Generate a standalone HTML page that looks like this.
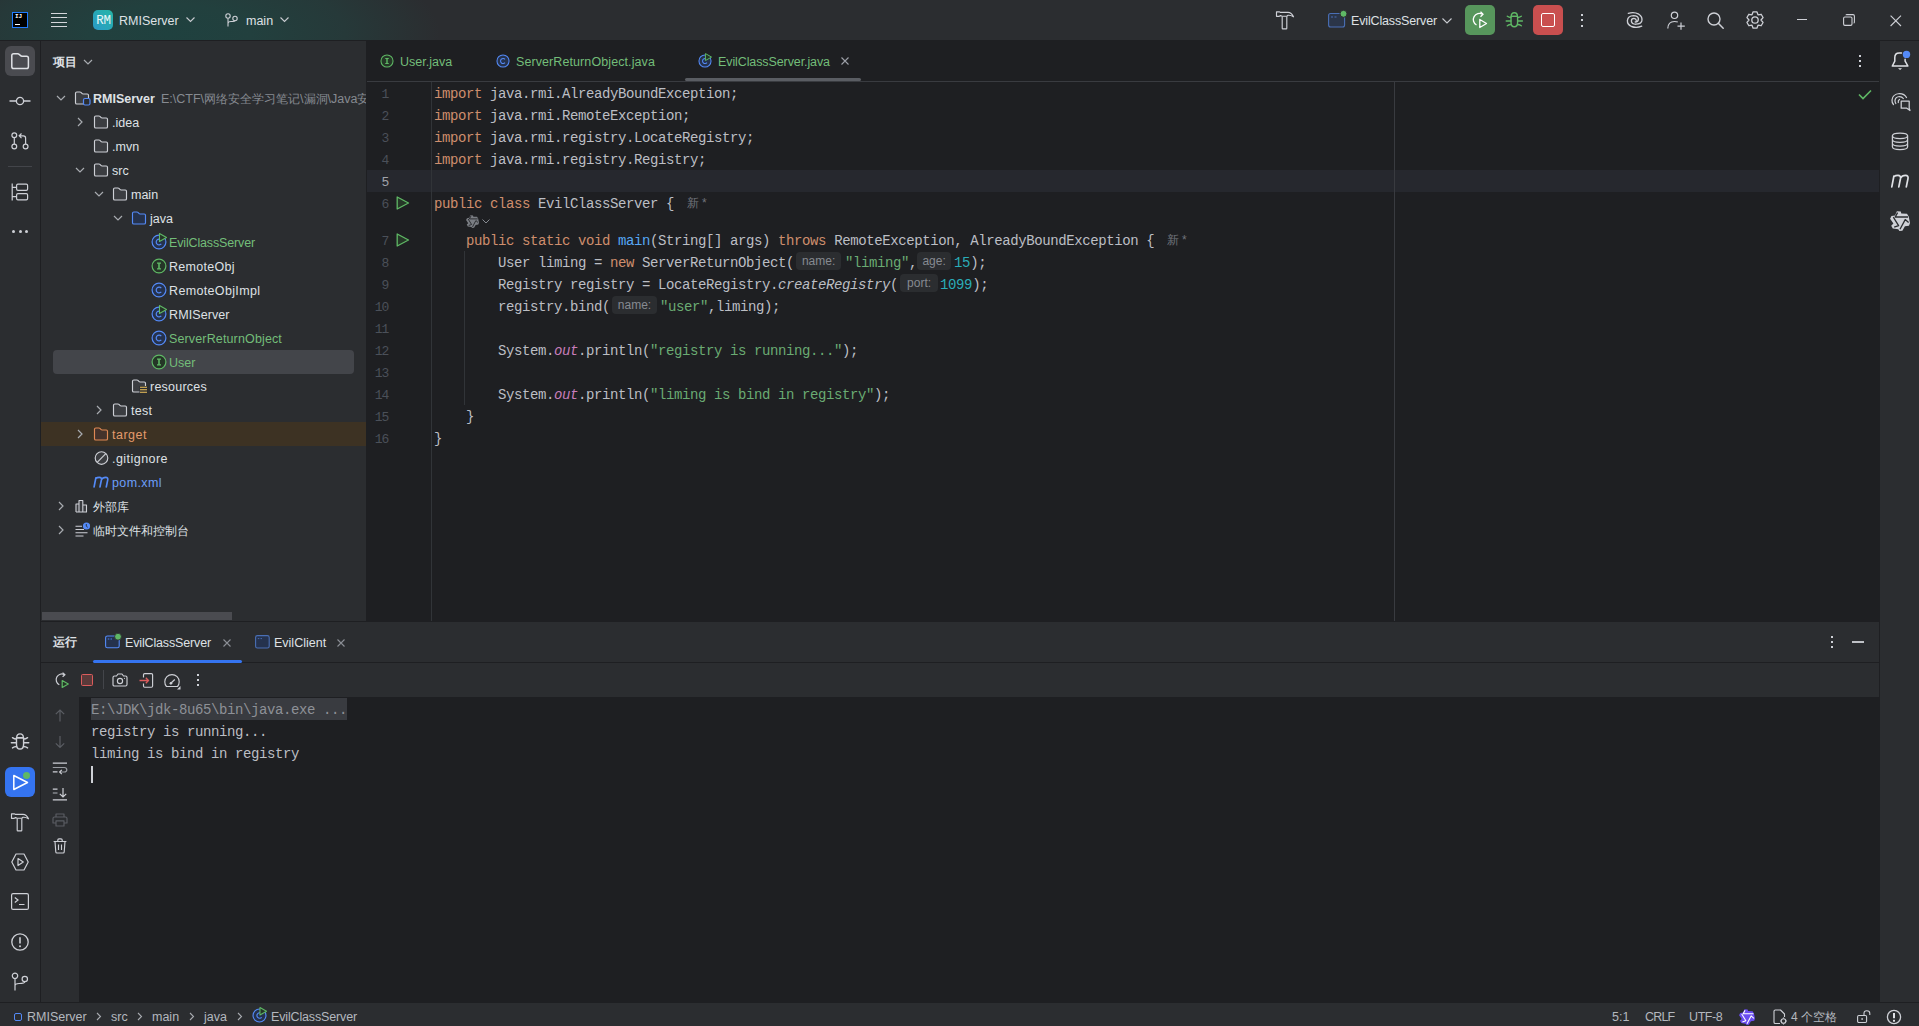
<!DOCTYPE html>
<html><head><meta charset="utf-8">
<style>
*{box-sizing:border-box;margin:0;padding:0}
html,body{width:1919px;height:1026px;overflow:hidden;background:#1E1F22;font-family:"Liberation Sans",sans-serif;font-size:12.5px;color:#DFE1E5}
.a{position:absolute}
.t{position:absolute;white-space:pre;line-height:24px}
.m{font-family:"Liberation Mono",monospace;font-size:14px;letter-spacing:-0.4px;line-height:22px;white-space:pre;position:absolute}
svg{position:absolute;overflow:visible}
/* syntax */
.k{color:#CF8E6D}.s{color:#6AAB73}.n{color:#2AACB8}.f{color:#56A8F5}.st{color:#C77DBB;font-style:italic}.it{font-style:italic}
.hw{display:inline-block;position:relative;height:22px;vertical-align:top}
.hint{position:absolute;top:0px;height:18px;background:#2B2D30;color:#868A91;font-family:"Liberation Sans",sans-serif;font-size:12px;letter-spacing:0;line-height:18px;text-align:center;border-radius:4px}
</style></head><body>




<!-- ============ TITLE BAR ============ -->
<div class="a" style="left:0;top:0;width:1919px;height:40px;background:#2B2D30"></div>
<div class="a" style="left:0;top:0;width:900px;height:40px;background:radial-gradient(ellipse 270px 100px at 170px 34px,#1f413f 0%,#22403e 30%,#263939 65%,#2B2D30 100%)"></div>
<div class="a" style="left:0;top:40px;width:1919px;height:1px;background:#1E1F22"></div>


<!-- title content -->
<div class="a" style="left:12px;top:12px;width:16px;height:16px;background:#000;border:1.2px solid #1F7BFF"></div>
<div class="a" style="left:15px;top:13px;font-family:'Liberation Mono';font-weight:700;font-size:6px;line-height:7px;color:#fff">IJ</div>
<div class="a" style="left:15px;top:23.5px;width:5px;height:1.3px;background:#fff"></div>
<div class="a" style="left:51px;top:12.5px;width:16px;height:1.4px;background:#D4D6DB"></div>
<div class="a" style="left:51px;top:17px;width:16px;height:1.4px;background:#D4D6DB"></div>
<div class="a" style="left:51px;top:21.5px;width:16px;height:1.4px;background:#D4D6DB"></div>
<div class="a" style="left:51px;top:26px;width:16px;height:1.4px;background:#D4D6DB"></div>
<div class="a" style="left:93px;top:10px;width:20px;height:20px;border-radius:5px;background:linear-gradient(45deg,#2A9BC8,#25B5A6)"></div>
<div class="t" style="left:93.5px;top:9px;width:20px;text-align:center;font-family:'Liberation Mono';font-size:12.5px;color:#EAF6F6;letter-spacing:-0.2px">RM</div>
<div class="t" style="left:119px;top:9px;color:#DFE1E5">RMIServer</div>
<svg style="left:186px;top:17px" width="9" height="6"><path d="M0.5 0.5 L4.5 4.5 L8.5 0.5" fill="none" stroke="#C9CCD1" stroke-width="1.1"/></svg>
<svg style="left:225px;top:13px" width="13" height="14"><circle cx="3" cy="3" r="2.2" fill="none" stroke="#CED0D6" stroke-width="1.1"/><circle cx="10" cy="5.5" r="2.2" fill="none" stroke="#CED0D6" stroke-width="1.1"/><path d="M3 5.2 V13.5 M3 10.5 Q3 8.5 6 8.5 Q10 8.5 10 7.7" fill="none" stroke="#CED0D6" stroke-width="1.1"/></svg>
<div class="t" style="left:246px;top:9px;color:#DFE1E5">main</div>
<svg style="left:280px;top:17px" width="9" height="6"><path d="M0.5 0.5 L4.5 4.5 L8.5 0.5" fill="none" stroke="#C9CCD1" stroke-width="1.1"/></svg>

<!-- hammer -->
<svg style="left:1275px;top:10px" width="20" height="20"><path d="M1.5 1.8 H4.3 L5.5 2.4 H13 Q16.5 2.4 18.5 6.8 Q15.5 4.9 13 5.3 L11.8 6.2 H7.2 L5.5 5.6 L4.3 6.3 H1.5 Z" fill="none" stroke="#CED0D6" stroke-width="1.15" stroke-linejoin="round"/><path d="M7.2 6.4 V18.2 Q7.2 18.8 7.8 18.8 H11.2 Q11.8 18.8 11.8 18.2 V6.4" fill="none" stroke="#CED0D6" stroke-width="1.15"/></svg>
<!-- run config -->
<svg style="left:1328px;top:10px" width="22" height="18"><rect x="0.6" y="3.5" width="16" height="13.5" rx="2" fill="#2B3548" stroke="#4A6FB5" stroke-width="1.1"/><path d="M3 7 H5 M6.5 7 H8.5" stroke="#4A6FB5" stroke-width="1"/><circle cx="15.5" cy="3.8" r="3.5" fill="#5FB865" stroke="#2B2D30" stroke-width="1"/></svg>
<div class="t" style="left:1351px;top:9px;color:#DFE1E5;letter-spacing:-0.15px">EvilClassServer</div>
<svg style="left:1442px;top:18px" width="10" height="6"><path d="M0.5 0.5 L5 5 L9.5 0.5" fill="none" stroke="#C9CCD1" stroke-width="1.1"/></svg>
<div class="a" style="left:1465px;top:5px;width:30px;height:30px;border-radius:5px;background:#57965C"></div>
<svg style="left:1471px;top:11px" width="19" height="19"><path d="M11.5 3.2 A6 6 0 1 0 5.5 14" fill="none" stroke="#fff" stroke-width="1.3"/><path d="M9.5 0.8 L12 3.3 L9.5 5.8" fill="none" stroke="#fff" stroke-width="1.3"/><path d="M8.8 8.5 L15.5 12.5 L8.8 16.5 Z" fill="none" stroke="#fff" stroke-width="1.3" stroke-linejoin="round"/></svg>
<svg style="left:1505px;top:12px" width="19" height="16"><path d="M6.2 4.4 Q6.2 0.8 9.3 0.8 Q12.4 0.8 12.4 4.4 Z" fill="none" stroke="#5FB865" stroke-width="1.4" stroke-linejoin="round"/><path d="M6 4.4 H12.6 V10.3 Q12.6 14.8 9.3 14.8 Q6 14.8 6 10.3 Z" fill="none" stroke="#5FB865" stroke-width="1.4" stroke-linejoin="round"/><path d="M2.3 4.3 Q4 5.6 6 5.6 M16.3 4.3 Q14.6 5.6 12.6 5.6 M1.2 9 H6 M12.6 9 H17.4 M2.3 13.8 Q4 12.5 6 12.5 M16.3 13.8 Q14.6 12.5 12.6 12.5" fill="none" stroke="#5FB865" stroke-width="1.4" stroke-linecap="round"/></svg>
<div class="a" style="left:1533px;top:5px;width:30px;height:30px;border-radius:5px;background:#C94F4F"></div>
<div class="a" style="left:1541px;top:13px;width:14px;height:14px;border-radius:2px;border:1.4px solid #fff"></div>
<div class="a" style="left:1581px;top:13.5px;width:2px;height:2px;background:#CED0D6"></div>
<div class="a" style="left:1581px;top:19px;width:2px;height:2px;background:#CED0D6"></div>
<div class="a" style="left:1581px;top:24.5px;width:2px;height:2px;background:#CED0D6"></div>
<!-- ai swirl -->
<svg style="left:1622px;top:6px" width="28" height="28"><path d="M6.3 7.4 Q12 5.6 16.8 8.2 Q20.8 10.8 19.8 15 Q18.8 18 14 18.2 Q9.6 18.2 9.4 15 Q9.4 12.4 12 12.4 Q14 12.6 14.3 14.3" fill="none" stroke="#CED0D6" stroke-width="1.35" stroke-linecap="round"/><path d="M19.7 20.2 Q14.5 22.3 9.5 20.5 Q5.2 18.5 5.4 14.5 Q6 9.8 11.5 9.7 Q16.2 9.8 16.4 12.9 Q16.4 15.8 13.2 16" fill="none" stroke="#CED0D6" stroke-width="1.35" stroke-linecap="round"/></svg>
<!-- person plus -->
<svg style="left:1667px;top:11px" width="19" height="19"><circle cx="7.5" cy="4.3" r="3.2" fill="none" stroke="#CED0D6" stroke-width="1.2"/><path d="M0.8 17.5 Q1 10.5 7.5 10.5 Q9.5 10.5 10.8 11" fill="none" stroke="#CED0D6" stroke-width="1.2"/><path d="M14 11.5 V18.8 M10.5 15.2 H17.8" stroke="#CED0D6" stroke-width="1.2"/></svg>
<!-- search -->
<svg style="left:1707px;top:12px" width="17" height="17"><circle cx="7" cy="7" r="6" fill="none" stroke="#CED0D6" stroke-width="1.4"/><path d="M11.3 11.3 L16.2 16.2" stroke="#CED0D6" stroke-width="1.5" stroke-linecap="round"/></svg>
<!-- gear -->
<svg style="left:1741px;top:6px" width="28" height="28"><path d="M12.11 5.82 L15.89 5.82 L17.00 8.80 L20.14 8.27 L22.03 11.54 L20.00 14.00 L22.03 16.46 L20.14 19.73 L17.00 19.20 L15.89 22.18 L12.11 22.18 L11.00 19.20 L7.86 19.73 L5.97 16.46 L8.00 14.00 L5.97 11.54 L7.86 8.27 L11.00 8.80 Z" fill="none" stroke="#CED0D6" stroke-width="1.3" stroke-linejoin="round"/><circle cx="14" cy="14" r="3.2" fill="none" stroke="#CED0D6" stroke-width="1.3"/></svg>
<div class="a" style="left:1797px;top:19px;width:10px;height:1.1px;background:#CED0D6"></div>
<svg style="left:1843px;top:14px" width="12" height="12"><rect x="0.6" y="3" width="8.4" height="8.4" rx="1.3" fill="none" stroke="#CED0D6" stroke-width="1.1"/><path d="M3 1.2 Q3 0.6 4 0.6 H10 Q11.4 0.6 11.4 2 V8 Q11.4 9 10.6 9" fill="none" stroke="#CED0D6" stroke-width="1.1"/></svg>
<svg style="left:1890px;top:14.5px" width="12" height="12"><path d="M0.6 0.6 L11 11 M11 0.6 L0.6 11" stroke="#CED0D6" stroke-width="1.1"/></svg>

<!-- ============ LEFT STRIPE ============ -->
<div class="a" style="left:0;top:41px;width:40px;height:962px;background:#2B2D30"></div>
<div class="a" style="left:40px;top:41px;width:1px;height:962px;background:#1E1F22"></div>


<!-- left stripe icons -->
<div class="a" style="left:5px;top:46px;width:30px;height:30px;border-radius:6px;background:#4A4B50"></div>
<svg style="left:10px;top:52px" width="20" height="18"><path d="M1.8 3.6 Q1.8 1.8 3.6 1.8 H7.8 Q8.6 1.8 9.2 2.4 L10.6 3.6 Q11.2 4.2 12 4.2 H16.6 Q18.4 4.2 18.4 6 V14.8 Q18.4 16.6 16.6 16.6 H3.6 Q1.8 16.6 1.8 14.8 Z" fill="none" stroke="#DFE1E5" stroke-width="1.5" stroke-linejoin="round"/></svg>
<svg style="left:9px;top:95px" width="22" height="12"><circle cx="11" cy="6" r="3.6" fill="none" stroke="#CED0D6" stroke-width="1.3"/><path d="M0.5 6 H7.4 M14.6 6 H21.5" stroke="#CED0D6" stroke-width="1.3"/></svg>
<svg style="left:11px;top:132px" width="18" height="18"><circle cx="3.3" cy="3.3" r="2.4" fill="none" stroke="#CED0D6" stroke-width="1.2"/><circle cx="3.3" cy="14.5" r="2.4" fill="none" stroke="#CED0D6" stroke-width="1.2"/><circle cx="14.6" cy="14.5" r="2.4" fill="none" stroke="#CED0D6" stroke-width="1.2"/><path d="M3.3 5.7 V12.1 M14.6 12.1 V6 Q14.6 3.8 12.4 3.8 H8.5 M10.5 1.5 L8.2 3.8 L10.5 6.1" fill="none" stroke="#CED0D6" stroke-width="1.2"/></svg>
<div class="a" style="left:8px;top:166px;width:24px;height:1px;background:#43454A"></div>
<svg style="left:11px;top:183px" width="18" height="18"><path d="M1.2 0.5 V17.5 M1.2 4.3 H5.6 M1.2 13.7 H5.6" fill="none" stroke="#CED0D6" stroke-width="1.2"/><rect x="5.6" y="1.2" width="11" height="6.2" rx="1.3" fill="none" stroke="#CED0D6" stroke-width="1.2"/><rect x="5.6" y="10.6" width="11" height="6.2" rx="1.3" fill="none" stroke="#CED0D6" stroke-width="1.2"/></svg>
<div class="a" style="left:12px;top:230px;width:3px;height:3px;border-radius:50%;background:#CED0D6"></div>
<div class="a" style="left:18.5px;top:230px;width:3px;height:3px;border-radius:50%;background:#CED0D6"></div>
<div class="a" style="left:25px;top:230px;width:3px;height:3px;border-radius:50%;background:#CED0D6"></div>

<svg style="left:10px;top:733px" width="20.5" height="17.3" viewBox="0 0 19 16"><path d="M6.2 4.4 Q6.2 0.8 9.3 0.8 Q12.4 0.8 12.4 4.4 Z" fill="none" stroke="#CED0D6" stroke-width="1.3" stroke-linejoin="round"/><path d="M6 4.4 H12.6 V10.3 Q12.6 14.8 9.3 14.8 Q6 14.8 6 10.3 Z" fill="none" stroke="#CED0D6" stroke-width="1.3" stroke-linejoin="round"/><path d="M2.3 4.3 Q4 5.6 6 5.6 M16.3 4.3 Q14.6 5.6 12.6 5.6 M1.2 9 H6 M12.6 9 H17.4 M2.3 13.8 Q4 12.5 6 12.5 M16.3 13.8 Q14.6 12.5 12.6 12.5" fill="none" stroke="#CED0D6" stroke-width="1.3" stroke-linecap="round"/></svg>
<div class="a" style="left:5px;top:767px;width:30px;height:30px;border-radius:6px;background:#3574F0"></div>
<svg style="left:12px;top:774px" width="18" height="17"><path d="M1.8 1.5 L15.5 8.5 L1.8 15.5 Z" fill="none" stroke="#fff" stroke-width="1.5" stroke-linejoin="round"/></svg>
<div class="a" style="left:23px;top:772px;width:7px;height:7px;border-radius:50%;background:#5FB865;box-shadow:0 0 0 1px #3574F0"></div>
<svg style="left:10px;top:812px" width="20" height="20"><path d="M1.5 1.8 H4.3 L5.5 2.4 H13 Q16.5 2.4 18.5 6.8 Q15.5 4.9 13 5.3 L11.8 6.2 H7.2 L5.5 5.6 L4.3 6.3 H1.5 Z" fill="none" stroke="#CED0D6" stroke-width="1.15" stroke-linejoin="round"/><path d="M7.2 6.4 V18.2 Q7.2 18.8 7.8 18.8 H11.2 Q11.8 18.8 11.8 18.2 V6.4" fill="none" stroke="#CED0D6" stroke-width="1.15"/></svg>
<svg style="left:11px;top:853px" width="18" height="18"><path d="M5 1 H13 L17.2 9 L13 17 H5 L0.8 9 Z" fill="none" stroke="#CED0D6" stroke-width="1.2" stroke-linejoin="round"/><path d="M7 5.5 L12.3 9 L7 12.5 Z" fill="none" stroke="#CED0D6" stroke-width="1.2" stroke-linejoin="round"/></svg>
<svg style="left:11px;top:893px" width="18" height="17"><rect x="0.6" y="0.6" width="16.8" height="15.8" rx="1.5" fill="none" stroke="#CED0D6" stroke-width="1.2"/><path d="M3.8 4.5 L7 7 L3.8 9.5 M8 11.5 H13.5" fill="none" stroke="#CED0D6" stroke-width="1.2"/></svg>
<svg style="left:11px;top:933px" width="18" height="18"><circle cx="9" cy="9" r="8.2" fill="none" stroke="#CED0D6" stroke-width="1.3"/><path d="M9 4.2 V10.5" stroke="#CED0D6" stroke-width="1.6"/><circle cx="9" cy="13.2" r="1" fill="#CED0D6"/></svg>
<svg style="left:11px;top:972px" width="18" height="19"><circle cx="4" cy="3.8" r="2.7" fill="none" stroke="#CED0D6" stroke-width="1.2"/><circle cx="13.8" cy="7" r="2.7" fill="none" stroke="#CED0D6" stroke-width="1.2"/><path d="M4 6.5 V18.5 M4 14 Q4 11.5 8 11.5 Q13.8 11.5 13.8 9.7" fill="none" stroke="#CED0D6" stroke-width="1.2"/></svg>

<!-- ============ PROJECT PANEL ============ -->
<div class="a" style="left:41px;top:41px;width:325px;height:580px;background:#2B2D30"></div>
<div class="a" style="left:366px;top:41px;width:1px;height:580px;background:#1E1F22"></div>

<!-- project panel content -->
<div class="t" style="left:53px;top:50px;font-size:12px;color:#DFE1E5;font-weight:700">项目</div>
<svg style="left:83px;top:58px" width="10" height="8"><svg viewBox="0 0 10 8" width="10" height="8" style="position:static;overflow:visible"><path d="M1 2 L5 6 L9 2" fill="none" stroke="#A8ABB0" stroke-width="1.2"/></svg></svg>
<div class="a" style="left:53px;top:350px;width:301px;height:24px;border-radius:4px;background:#43454A"></div>
<div class="a" style="left:41px;top:422px;width:325px;height:24px;background:#3D3223"></div>
<div class="a" style="left:42px;top:612px;width:190px;height:8px;border-radius:0;background:#4A4B50"></div>
<svg style="left:56px;top:94px" width="10" height="8"><svg viewBox="0 0 10 8" width="10" height="8" style="position:static;overflow:visible"><path d="M1 2 L5 6 L9 2" fill="none" stroke="#A8ABB0" stroke-width="1.2"/></svg></svg>
<svg style="left:74px;top:91px" width="18" height="16"><svg viewBox="0 0 16 14" width="16" height="14" style="position:static;overflow:visible"><path d="M1.5 2.3 Q1.5 1 2.8 1 H6 Q6.5 1 6.9 1.4 L8.2 2.7 Q8.5 3 9 3 H13.2 Q14.5 3 14.5 4.3 V11.7 Q14.5 13 13.2 13 H2.8 Q1.5 13 1.5 11.7 Z" fill="#3B3D41" stroke="#CED0D6" stroke-width="1.15" stroke-linejoin="round"/></svg><rect x="9.5" y="7.5" width="6.5" height="6.5" rx="1.5" fill="#2B2D30" stroke="#548AF7" stroke-width="1.2"/></svg>
<div class="t" style="left:93px;top:87px;color:#DFE1E5;font-weight:700">RMIServer</div>
<svg style="left:76px;top:117px" width="8" height="10"><svg viewBox="0 0 8 10" width="8" height="10" style="position:static;overflow:visible"><path d="M2 1 L6 5 L2 9" fill="none" stroke="#A8ABB0" stroke-width="1.2"/></svg></svg>
<svg style="left:93px;top:115px" width="16" height="14"><svg viewBox="0 0 16 14" width="16" height="14" style="position:static;overflow:visible"><path d="M1.5 2.3 Q1.5 1 2.8 1 H6 Q6.5 1 6.9 1.4 L8.2 2.7 Q8.5 3 9 3 H13.2 Q14.5 3 14.5 4.3 V11.7 Q14.5 13 13.2 13 H2.8 Q1.5 13 1.5 11.7 Z" fill="#3B3D41" stroke="#CED0D6" stroke-width="1.15" stroke-linejoin="round"/></svg></svg>
<div class="t" style="left:112px;top:111px;color:#DFE1E5">.idea</div>
<svg style="left:93px;top:139px" width="16" height="14"><svg viewBox="0 0 16 14" width="16" height="14" style="position:static;overflow:visible"><path d="M1.5 2.3 Q1.5 1 2.8 1 H6 Q6.5 1 6.9 1.4 L8.2 2.7 Q8.5 3 9 3 H13.2 Q14.5 3 14.5 4.3 V11.7 Q14.5 13 13.2 13 H2.8 Q1.5 13 1.5 11.7 Z" fill="#3B3D41" stroke="#CED0D6" stroke-width="1.15" stroke-linejoin="round"/></svg></svg>
<div class="t" style="left:112px;top:135px;color:#DFE1E5">.mvn</div>
<svg style="left:75px;top:166px" width="10" height="8"><svg viewBox="0 0 10 8" width="10" height="8" style="position:static;overflow:visible"><path d="M1 2 L5 6 L9 2" fill="none" stroke="#A8ABB0" stroke-width="1.2"/></svg></svg>
<svg style="left:93px;top:163px" width="16" height="14"><svg viewBox="0 0 16 14" width="16" height="14" style="position:static;overflow:visible"><path d="M1.5 2.3 Q1.5 1 2.8 1 H6 Q6.5 1 6.9 1.4 L8.2 2.7 Q8.5 3 9 3 H13.2 Q14.5 3 14.5 4.3 V11.7 Q14.5 13 13.2 13 H2.8 Q1.5 13 1.5 11.7 Z" fill="#3B3D41" stroke="#CED0D6" stroke-width="1.15" stroke-linejoin="round"/></svg></svg>
<div class="t" style="left:112px;top:159px;color:#DFE1E5">src</div>
<svg style="left:94px;top:190px" width="10" height="8"><svg viewBox="0 0 10 8" width="10" height="8" style="position:static;overflow:visible"><path d="M1 2 L5 6 L9 2" fill="none" stroke="#A8ABB0" stroke-width="1.2"/></svg></svg>
<svg style="left:112px;top:187px" width="16" height="14"><svg viewBox="0 0 16 14" width="16" height="14" style="position:static;overflow:visible"><path d="M1.5 2.3 Q1.5 1 2.8 1 H6 Q6.5 1 6.9 1.4 L8.2 2.7 Q8.5 3 9 3 H13.2 Q14.5 3 14.5 4.3 V11.7 Q14.5 13 13.2 13 H2.8 Q1.5 13 1.5 11.7 Z" fill="#3B3D41" stroke="#CED0D6" stroke-width="1.15" stroke-linejoin="round"/></svg></svg>
<div class="t" style="left:131px;top:183px;color:#DFE1E5">main</div>
<svg style="left:113px;top:214px" width="10" height="8"><svg viewBox="0 0 10 8" width="10" height="8" style="position:static;overflow:visible"><path d="M1 2 L5 6 L9 2" fill="none" stroke="#A8ABB0" stroke-width="1.2"/></svg></svg>
<svg style="left:131px;top:211px" width="16" height="14"><svg viewBox="0 0 16 14" width="16" height="14" style="position:static;overflow:visible"><path d="M1.5 2.3 Q1.5 1 2.8 1 H6 Q6.5 1 6.9 1.4 L8.2 2.7 Q8.5 3 9 3 H13.2 Q14.5 3 14.5 4.3 V11.7 Q14.5 13 13.2 13 H2.8 Q1.5 13 1.5 11.7 Z" fill="#25324D" stroke="#548AF7" stroke-width="1.15" stroke-linejoin="round"/></svg></svg>
<div class="t" style="left:150px;top:207px;color:#DFE1E5">java</div>
<svg style="left:151px;top:234px" width="16" height="16"><svg viewBox="0 0 16 16" width="16" height="16" style="position:static;overflow:visible"><circle cx="8" cy="8" r="6.9" fill="#25324D" stroke="#548AF7" stroke-width="1.2"/><path d="M10.3 6.1 A2.9 2.9 0 1 0 10.3 9.9" fill="none" stroke="#548AF7" stroke-width="1.2"/><path d="M8.5 -0.5 L15.5 3.5 L8.5 7.5 Z" fill="#253627" stroke="#5FB865" stroke-width="1.1" stroke-linejoin="round"/></svg></svg>
<div class="t" style="left:169px;top:231px;color:#73BD79;letter-spacing:-0.15px">EvilClassServer</div>
<svg style="left:151px;top:258px" width="16" height="16"><svg viewBox="0 0 16 16" width="16" height="16" style="position:static;overflow:visible"><circle cx="8" cy="8" r="6.9" fill="#253627" stroke="#5FB865" stroke-width="1.2"/><path d="M6 4.6 H10 V5.8 H8.8 V10.2 H10 V11.4 H6 V10.2 H7.2 V5.8 H6 Z" fill="#5FB865"/></svg></svg>
<div class="t" style="left:169px;top:255px;color:#DFE1E5;letter-spacing:0.3px">RemoteObj</div>
<svg style="left:151px;top:282px" width="16" height="16"><svg viewBox="0 0 16 16" width="16" height="16" style="position:static;overflow:visible"><circle cx="8" cy="8" r="6.9" fill="#25324D" stroke="#548AF7" stroke-width="1.2"/><path d="M10.3 6.1 A2.9 2.9 0 1 0 10.3 9.9" fill="none" stroke="#548AF7" stroke-width="1.2"/></svg></svg>
<div class="t" style="left:169px;top:279px;color:#DFE1E5;letter-spacing:0.35px">RemoteObjImpl</div>
<svg style="left:151px;top:306px" width="16" height="16"><svg viewBox="0 0 16 16" width="16" height="16" style="position:static;overflow:visible"><circle cx="8" cy="8" r="6.9" fill="#25324D" stroke="#548AF7" stroke-width="1.2"/><path d="M10.3 6.1 A2.9 2.9 0 1 0 10.3 9.9" fill="none" stroke="#548AF7" stroke-width="1.2"/><path d="M8.5 -0.5 L15.5 3.5 L8.5 7.5 Z" fill="#253627" stroke="#5FB865" stroke-width="1.1" stroke-linejoin="round"/></svg></svg>
<div class="t" style="left:169px;top:303px;color:#DFE1E5;letter-spacing:0.1px">RMIServer</div>
<svg style="left:151px;top:330px" width="16" height="16"><svg viewBox="0 0 16 16" width="16" height="16" style="position:static;overflow:visible"><circle cx="8" cy="8" r="6.9" fill="#25324D" stroke="#548AF7" stroke-width="1.2"/><path d="M10.3 6.1 A2.9 2.9 0 1 0 10.3 9.9" fill="none" stroke="#548AF7" stroke-width="1.2"/></svg></svg>
<div class="t" style="left:169px;top:327px;color:#73BD79;letter-spacing:0.14px">ServerReturnObject</div>
<svg style="left:151px;top:354px" width="16" height="16"><svg viewBox="0 0 16 16" width="16" height="16" style="position:static;overflow:visible"><circle cx="8" cy="8" r="6.9" fill="#253627" stroke="#5FB865" stroke-width="1.2"/><path d="M6 4.6 H10 V5.8 H8.8 V10.2 H10 V11.4 H6 V10.2 H7.2 V5.8 H6 Z" fill="#5FB865"/></svg></svg>
<div class="t" style="left:169px;top:351px;color:#73BD79">User</div>
<svg style="left:131px;top:379px" width="18" height="16"><svg viewBox="0 0 16 14" width="16" height="14" style="position:static;overflow:visible"><path d="M1.5 2.3 Q1.5 1 2.8 1 H6 Q6.5 1 6.9 1.4 L8.2 2.7 Q8.5 3 9 3 H13.2 Q14.5 3 14.5 4.3 V11.7 Q14.5 13 13.2 13 H2.8 Q1.5 13 1.5 11.7 Z" fill="#3B3D41" stroke="#CED0D6" stroke-width="1.15" stroke-linejoin="round"/></svg><rect x="8.5" y="7" width="8" height="8" fill="#2B2D30"/><path d="M9 8.3 H16 M9 10.8 H16 M9 13.3 H16" stroke="#F2C55C" stroke-width="1.1"/></svg>
<div class="t" style="left:150px;top:375px;color:#DFE1E5;letter-spacing:0.23px">resources</div>
<svg style="left:95px;top:405px" width="8" height="10"><svg viewBox="0 0 8 10" width="8" height="10" style="position:static;overflow:visible"><path d="M2 1 L6 5 L2 9" fill="none" stroke="#A8ABB0" stroke-width="1.2"/></svg></svg>
<svg style="left:112px;top:403px" width="16" height="14"><svg viewBox="0 0 16 14" width="16" height="14" style="position:static;overflow:visible"><path d="M1.5 2.3 Q1.5 1 2.8 1 H6 Q6.5 1 6.9 1.4 L8.2 2.7 Q8.5 3 9 3 H13.2 Q14.5 3 14.5 4.3 V11.7 Q14.5 13 13.2 13 H2.8 Q1.5 13 1.5 11.7 Z" fill="#3B3D41" stroke="#CED0D6" stroke-width="1.15" stroke-linejoin="round"/></svg></svg>
<div class="t" style="left:131px;top:399px;color:#DFE1E5;letter-spacing:0.25px">test</div>
<svg style="left:76px;top:429px" width="8" height="10"><svg viewBox="0 0 8 10" width="8" height="10" style="position:static;overflow:visible"><path d="M2 1 L6 5 L2 9" fill="none" stroke="#A8ABB0" stroke-width="1.2"/></svg></svg>
<svg style="left:93px;top:427px" width="16" height="14"><svg viewBox="0 0 16 14" width="16" height="14" style="position:static;overflow:visible"><path d="M1.5 2.3 Q1.5 1 2.8 1 H6 Q6.5 1 6.9 1.4 L8.2 2.7 Q8.5 3 9 3 H13.2 Q14.5 3 14.5 4.3 V11.7 Q14.5 13 13.2 13 H2.8 Q1.5 13 1.5 11.7 Z" fill="#45322B" stroke="#E08855" stroke-width="1.15" stroke-linejoin="round"/></svg></svg>
<div class="t" style="left:112px;top:423px;color:#E39A6C;letter-spacing:0.5px">target</div>
<svg style="left:94px;top:450px" width="16" height="16"><circle cx="7.5" cy="8" r="6.3" fill="#3B3D41" stroke="#CED0D6" stroke-width="1.15"/><path d="M3.2 12.3 L11.8 3.7" stroke="#CED0D6" stroke-width="1.15"/></svg>
<div class="t" style="left:112px;top:447px;color:#DFE1E5;letter-spacing:0.46px">.gitignore</div>
<svg style="left:93px;top:476px" width="16" height="12" viewBox="4.5 6.5 19 13"><path d="M5.8 18.8 L7.9 8 M7.9 8.6 Q9.5 7.4 12 7.4 Q15 7.4 14.5 10.5 L12.8 18.8 M14.5 10.2 Q16 7.4 19.5 7.4 Q22.6 7.4 22 10.5 L20.3 18.8" fill="none" stroke="#548AF7" stroke-width="2" stroke-linecap="round" stroke-linejoin="round"/></svg>
<div class="t" style="left:112px;top:471px;color:#6C9EF8;letter-spacing:0.37px">pom.xml</div>
<svg style="left:57px;top:501px" width="8" height="10"><svg viewBox="0 0 8 10" width="8" height="10" style="position:static;overflow:visible"><path d="M2 1 L6 5 L2 9" fill="none" stroke="#A8ABB0" stroke-width="1.2"/></svg></svg>
<svg style="left:75px;top:499px" width="16" height="14"><path d="M1 13 V5 H4 V13 M4 13 V1.5 H7.8 V13 M7.8 13 V6 H11.5 V13 H1" fill="#3B3D41" stroke="#CED0D6" stroke-width="1.1" stroke-linejoin="round"/></svg>
<div class="t" style="left:93px;top:495px;color:#DFE1E5;font-size:11.5px">外部库</div>
<svg style="left:57px;top:525px" width="8" height="10"><svg viewBox="0 0 8 10" width="8" height="10" style="position:static;overflow:visible"><path d="M2 1 L6 5 L2 9" fill="none" stroke="#A8ABB0" stroke-width="1.2"/></svg></svg>
<svg style="left:75px;top:522px" width="16" height="16"><path d="M0.5 4.2 H7 M0.5 7.5 H9 M0.5 10.8 H12.5 M0.5 14 H8.5" stroke="#CED0D6" stroke-width="1.1"/><circle cx="11.5" cy="4" r="3.6" fill="#548AF7"/><path d="M11.3 2 V4.2 L12.8 5.3" fill="none" stroke="#2B2D30" stroke-width="0.9"/></svg>
<div class="t" style="left:93px;top:519px;color:#DFE1E5;font-size:11.5px">临时文件和控制台</div>
<div class="t" style="left:161px;top:87px;color:#868A91;width:205px;overflow:hidden">E:\CTF\<span style="font-size:11.5px">网络安全学习笔记</span>\<span style="font-size:11.5px">漏洞</span>\Java<span style="font-size:11.5px">安全</span></div>

<!-- ============ EDITOR ============ -->
<div class="a" style="left:367px;top:41px;width:1512px;height:580px;background:#1E1F22"></div>
<div class="a" style="left:367px;top:81px;width:1512px;height:1px;background:#393B40"></div>

<!-- editor content -->
<svg style="left:380px;top:54px" width="14" height="14"><svg viewBox="0 0 16 16" width="14" height="14" style="position:static;overflow:visible"><circle cx="8" cy="8" r="6.9" fill="#253627" stroke="#5FB865" stroke-width="1.2"/><path d="M6 4.6 H10 V5.8 H8.8 V10.2 H10 V11.4 H6 V10.2 H7.2 V5.8 H6 Z" fill="#5FB865"/></svg></svg>
<div class="t" style="left:400px;top:50px;color:#73BD79">User.java</div>
<svg style="left:496px;top:54px" width="14" height="14"><svg viewBox="0 0 16 16" width="14" height="14" style="position:static;overflow:visible"><circle cx="8" cy="8" r="6.9" fill="#25324D" stroke="#548AF7" stroke-width="1.2"/><path d="M10.3 6.1 A2.9 2.9 0 1 0 10.3 9.9" fill="none" stroke="#548AF7" stroke-width="1.2"/></svg></svg>
<div class="t" style="left:516px;top:50px;color:#73BD79;letter-spacing:0.09px">ServerReturnObject.java</div>
<svg style="left:698px;top:54px" width="14" height="14"><svg viewBox="0 0 16 16" width="14" height="14" style="position:static;overflow:visible"><circle cx="8" cy="8" r="6.9" fill="#25324D" stroke="#548AF7" stroke-width="1.2"/><path d="M10.3 6.1 A2.9 2.9 0 1 0 10.3 9.9" fill="none" stroke="#548AF7" stroke-width="1.2"/><path d="M8.5 -0.5 L15.5 3.5 L8.5 7.5 Z" fill="#253627" stroke="#5FB865" stroke-width="1.1" stroke-linejoin="round"/></svg></svg>
<div class="t" style="left:718px;top:50px;color:#73BD79;letter-spacing:-0.1px">EvilClassServer.java</div>
<svg style="left:841px;top:57px" width="8" height="8"><path d="M0.5 0.5 L7.5 7.5 M7.5 0.5 L0.5 7.5" stroke="#9DA0A8" stroke-width="1.1"/></svg>
<div class="a" style="left:685px;top:78px;width:176px;height:3px;border-radius:1.5px;background:#5A5D63"></div>
<div class="a" style="left:1859px;top:55px;width:2px;height:2px;background:#CED0D6"></div>
<div class="a" style="left:1859px;top:60px;width:2px;height:2px;background:#CED0D6"></div>
<div class="a" style="left:1859px;top:65px;width:2px;height:2px;background:#CED0D6"></div>
<div class="a" style="left:367px;top:170px;width:1512px;height:22px;background:#26282E"></div>
<div class="a" style="left:431px;top:82px;width:1px;height:539px;background:#313438"></div>
<div class="a" style="left:1394px;top:82px;width:1px;height:539px;background:#393B40"></div>
<div class="a" style="left:464px;top:251px;width:1px;height:154px;background:#313438"></div>
<svg style="left:1858px;top:89px" width="14" height="11"><path d="M1 5.5 L5 9.5 L13 1.5" fill="none" stroke="#5FB865" stroke-width="1.6"/></svg>
<div class="m" style="left:348px;top:84px;width:40px;text-align:right;color:#4B5059;font-size:13px;letter-spacing:-1.2px">1</div>
<div class="m" style="left:434px;top:83px;color:#BCBEC4"><span class="k">import</span> java.rmi.AlreadyBoundException;</div>
<div class="m" style="left:348px;top:106px;width:40px;text-align:right;color:#4B5059;font-size:13px;letter-spacing:-1.2px">2</div>
<div class="m" style="left:434px;top:105px;color:#BCBEC4"><span class="k">import</span> java.rmi.RemoteException;</div>
<div class="m" style="left:348px;top:128px;width:40px;text-align:right;color:#4B5059;font-size:13px;letter-spacing:-1.2px">3</div>
<div class="m" style="left:434px;top:127px;color:#BCBEC4"><span class="k">import</span> java.rmi.registry.LocateRegistry;</div>
<div class="m" style="left:348px;top:150px;width:40px;text-align:right;color:#4B5059;font-size:13px;letter-spacing:-1.2px">4</div>
<div class="m" style="left:434px;top:149px;color:#BCBEC4"><span class="k">import</span> java.rmi.registry.Registry;</div>
<div class="m" style="left:348px;top:172px;width:40px;text-align:right;color:#A1A3AB;font-size:13px;letter-spacing:-1.2px">5</div>
<div class="m" style="left:348px;top:194px;width:40px;text-align:right;color:#4B5059;font-size:13px;letter-spacing:-1.2px">6</div>
<div class="m" style="left:434px;top:193px;color:#BCBEC4"><span class="k">public class</span> EvilClassServer {</div>
<div class="m" style="left:348px;top:231px;width:40px;text-align:right;color:#4B5059;font-size:13px;letter-spacing:-1.2px">7</div>
<div class="m" style="left:434px;top:230px;color:#BCBEC4">    <span class="k">public static void</span> <span class="f">main</span>(String[] args) <span class="k">throws</span> RemoteException, AlreadyBoundException {</div>
<div class="m" style="left:348px;top:253px;width:40px;text-align:right;color:#4B5059;font-size:13px;letter-spacing:-1.2px">8</div>
<div class="m" style="left:434px;top:252px;color:#BCBEC4">        User liming = <span class="k">new</span> ServerReturnObject(<span class="hw" style="width:51px"><span class="hint" style="left:2px;width:45px">name:</span></span><span class="s">"liming"</span>,<span class="hw" style="width:37px"><span class="hint" style="left:0px;width:34px">age:</span></span><span class="n">15</span>);</div>
<div class="m" style="left:348px;top:275px;width:40px;text-align:right;color:#4B5059;font-size:13px;letter-spacing:-1.2px">9</div>
<div class="m" style="left:434px;top:274px;color:#BCBEC4">        Registry registry = LocateRegistry.<span class="it">createRegistry</span>(<span class="hw" style="width:42px"><span class="hint" style="left:2px;width:38px">port:</span></span><span class="n">1099</span>);</div>
<div class="m" style="left:348px;top:297px;width:40px;text-align:right;color:#4B5059;font-size:13px;letter-spacing:-1.2px">10</div>
<div class="m" style="left:434px;top:296px;color:#BCBEC4">        registry.bind(<span class="hw" style="width:50px"><span class="hint" style="left:2px;width:45px">name:</span></span><span class="s">"user"</span>,liming);</div>
<div class="m" style="left:348px;top:319px;width:40px;text-align:right;color:#4B5059;font-size:13px;letter-spacing:-1.2px">11</div>
<div class="m" style="left:348px;top:341px;width:40px;text-align:right;color:#4B5059;font-size:13px;letter-spacing:-1.2px">12</div>
<div class="m" style="left:434px;top:340px;color:#BCBEC4">        System.<span class="st">out</span>.println(<span class="s">"registry is running..."</span>);</div>
<div class="m" style="left:348px;top:363px;width:40px;text-align:right;color:#4B5059;font-size:13px;letter-spacing:-1.2px">13</div>
<div class="m" style="left:348px;top:385px;width:40px;text-align:right;color:#4B5059;font-size:13px;letter-spacing:-1.2px">14</div>
<div class="m" style="left:434px;top:384px;color:#BCBEC4">        System.<span class="st">out</span>.println(<span class="s">"liming is bind in registry"</span>);</div>
<div class="m" style="left:348px;top:407px;width:40px;text-align:right;color:#4B5059;font-size:13px;letter-spacing:-1.2px">15</div>
<div class="m" style="left:434px;top:406px;color:#BCBEC4">    }</div>
<div class="m" style="left:348px;top:429px;width:40px;text-align:right;color:#4B5059;font-size:13px;letter-spacing:-1.2px">16</div>
<div class="m" style="left:434px;top:428px;color:#BCBEC4">}</div>
<div class="t" style="left:687px;top:192px;line-height:22px;font-size:12px;color:#6F737A">新</div><div class="t" style="left:702px;top:192px;line-height:22px;font-size:12px;color:#6F737A">*</div>
<div class="t" style="left:1167px;top:229px;line-height:22px;font-size:12px;color:#6F737A">新</div><div class="t" style="left:1182px;top:229px;line-height:22px;font-size:12px;color:#6F737A">*</div>
<svg style="left:396px;top:196px" width="14" height="14"><path d="M1.2 1 L12.5 7 L1.2 13 Z" fill="#253627" stroke="#5FB865" stroke-width="1.3" stroke-linejoin="round"/></svg>
<svg style="left:396px;top:233px" width="14" height="14"><path d="M1.2 1 L12.5 7 L1.2 13 Z" fill="#253627" stroke="#5FB865" stroke-width="1.3" stroke-linejoin="round"/></svg>
<svg style="left:466px;top:215px" width="13" height="13"><svg viewBox="0 0 20 20" width="13" height="13" fill="#7A7D83" stroke="#1E1F22" style="position:static;overflow:visible"><path d="M6.9 0.3 L10.8 0.6 L11.3 2.5 L17 2.8 L18.7 5.5 L20 12.1 L19 14.8 L14.9 15.3 L12.4 19.7 L9.4 20 L8.3 18.3 L2.8 17.5 L1.2 14.8 L3.4 12.6 L0.1 7.7 L1.5 5 L5 4.4 Z" stroke="none"/><path d="M7.6 1.6 L5.2 6 H18 M3.3 6.2 L8.6 14.6 L4.2 16.2 M18.6 11.6 L15.2 8.6 L10 18.3" fill="none" stroke-width="1.3" stroke-linejoin="round"/></svg></svg>
<svg style="left:482px;top:219px" width="8" height="5"><path d="M0.5 0.5 L4 4 L7.5 0.5" fill="none" stroke="#868A91" stroke-width="1"/></svg>

<!-- ============ RIGHT STRIPE ============ -->
<div class="a" style="left:1880px;top:41px;width:39px;height:962px;background:#2B2D30"></div>
<div class="a" style="left:1879px;top:41px;width:1px;height:962px;background:#1E1F22"></div>


<!-- right stripe icons -->
<svg style="left:1886px;top:48px" width="28" height="28"><path d="M15.5 4.9 H13.2 Q8.8 4.9 8.8 9.6 V13.1 L6.3 18 H21.9 L19.1 13.1 V11.2" fill="none" stroke="#DFE1E5" stroke-width="1.5" stroke-linejoin="round" stroke-linecap="round"/><path d="M12 20.2 H16.1 L14.05 21.9 Z" fill="#DFE1E5"/><circle cx="20.5" cy="6.4" r="3.7" fill="#548AF7"/></svg>
<svg style="left:1891px;top:92px" width="20" height="20"><path d="M2.5 12.5 Q0.8 10.5 1 8 Q1.5 2.2 8.5 1.5 Q13.5 1.5 15.5 5.5 M4.8 11.5 Q3.8 10 4 8.3 Q4.5 4.8 8.5 4.5 Q11 4.5 12.3 6.5 M7.3 10.5 Q6.8 8.5 8.5 7.5" fill="none" stroke="#CED0D6" stroke-width="1.25" stroke-linecap="round"/><path d="M10.2 9.2 H18.2 V16.2 L19 18.5 L15.8 16.2 H10.2 Z" fill="#2B2D30" stroke="#CED0D6" stroke-width="1.25" stroke-linejoin="round"/></svg>
<svg style="left:1891px;top:132px" width="18" height="19"><ellipse cx="9" cy="3.8" rx="7.6" ry="2.8" fill="none" stroke="#CED0D6" stroke-width="1.25"/><path d="M1.4 3.8 V14.8 Q1.4 17.6 9 17.6 Q16.6 17.6 16.6 14.8 V3.8 M1.4 7.6 Q1.4 10.4 9 10.4 Q16.6 10.4 16.6 7.6 M1.4 11.2 Q1.4 14 9 14 Q16.6 14 16.6 11.2" fill="none" stroke="#CED0D6" stroke-width="1.25"/></svg>
<svg style="left:1886px;top:168px" width="28" height="28"><path d="M5.8 18.8 L7.9 8 M7.9 8.6 Q9.5 7.4 12 7.4 Q15 7.4 14.5 10.5 L12.8 18.8 M14.5 10.2 Q16 7.4 19.5 7.4 Q22.6 7.4 22 10.5 L20.3 18.8" fill="none" stroke="#DFE1E5" stroke-width="1.7" stroke-linecap="round" stroke-linejoin="round"/></svg>
<svg style="left:1890px;top:211px" width="20" height="20"><svg viewBox="0 0 20 20" width="20" height="20" fill="#CED0D6" stroke="#2B2D30" style="position:static;overflow:visible"><path d="M6.9 0.3 L10.8 0.6 L11.3 2.5 L17 2.8 L18.7 5.5 L20 12.1 L19 14.8 L14.9 15.3 L12.4 19.7 L9.4 20 L8.3 18.3 L2.8 17.5 L1.2 14.8 L3.4 12.6 L0.1 7.7 L1.5 5 L5 4.4 Z" stroke="none"/><path d="M7.6 1.6 L5.2 6 H18 M3.3 6.2 L8.6 14.6 L4.2 16.2 M18.6 11.6 L15.2 8.6 L10 18.3" fill="none" stroke-width="1.3" stroke-linejoin="round"/></svg></svg>

<!-- ============ BOTTOM PANEL ============ -->
<div class="a" style="left:41px;top:621px;width:1838px;height:1px;background:#1E1F22"></div>
<div class="a" style="left:41px;top:622px;width:1838px;height:75px;background:#2B2D30"></div>
<div class="a" style="left:41px;top:662px;width:1838px;height:1px;background:#1E1F22"></div>
<div class="a" style="left:41px;top:697px;width:38px;height:305px;background:#2B2D30"></div>
<div class="a" style="left:79px;top:697px;width:1800px;height:305px;background:#1E1F22"></div>

<!-- ============ STATUS BAR ============ -->
<div class="a" style="left:0;top:1002px;width:1919px;height:1px;background:#1E1F22"></div>
<div class="a" style="left:0;top:1003px;width:1919px;height:23px;background:#2B2D30"></div>


<!-- bottom panel content -->
<div class="t" style="left:53px;top:630px;font-size:12px;font-weight:700;color:#DFE1E5">运行</div>
<svg style="left:105px;top:633px" width="18" height="16"><rect x="0.6" y="3" width="13.6" height="11.8" rx="1.8" fill="#25324D" stroke="#548AF7" stroke-width="1.1"/><path d="M2.8 6 H4.3 M5.5 6 H7" stroke="#548AF7" stroke-width="0.9"/><circle cx="13" cy="3.7" r="3.4" fill="#5FB865" stroke="#2B2D30" stroke-width="0.8"/></svg>
<div class="t" style="left:125px;top:631px;color:#DFE1E5;letter-spacing:-0.15px">EvilClassServer</div>
<svg style="left:223px;top:639px" width="8" height="8"><path d="M0.5 0.5 L7.5 7.5 M7.5 0.5 L0.5 7.5" stroke="#8C8F96" stroke-width="1.1"/></svg>
<div class="a" style="left:93px;top:660px;width:149px;height:3px;border-radius:1.5px;background:#3574F0"></div>
<svg style="left:255px;top:635px" width="15" height="14"><rect x="0.6" y="0.6" width="13.6" height="12.4" rx="1.8" fill="#25324D" stroke="#4A6FB5" stroke-width="1.1"/><path d="M2.8 3.6 H4.3 M5.5 3.6 H7" stroke="#4A6FB5" stroke-width="0.9"/></svg>
<div class="t" style="left:274px;top:631px;color:#DFE1E5">EvilClient</div>
<svg style="left:337px;top:639px" width="8" height="8"><path d="M0.5 0.5 L7.5 7.5 M7.5 0.5 L0.5 7.5" stroke="#8C8F96" stroke-width="1.1"/></svg>
<div class="a" style="left:1831px;top:636px;width:2px;height:2px;background:#CED0D6"></div>
<div class="a" style="left:1831px;top:641px;width:2px;height:2px;background:#CED0D6"></div>
<div class="a" style="left:1831px;top:646px;width:2px;height:2px;background:#CED0D6"></div>
<div class="a" style="left:1852px;top:641.3px;width:12px;height:1.7px;background:#BFC1C6"></div>
<!-- toolbar -->
<svg style="left:54px;top:672px" width="17" height="17"><path d="M10.5 2.6 A5.6 5.6 0 1 0 5.3 12.8" fill="none" stroke="#CED0D6" stroke-width="1.2"/><path d="M8.6 0.6 L10.9 2.7 L8.6 4.8" fill="none" stroke="#CED0D6" stroke-width="1.2"/><path d="M8.2 8.6 L14.3 12 L8.2 15.4 Z" fill="#253627" stroke="#5FB865" stroke-width="1.2" stroke-linejoin="round"/></svg>
<div class="a" style="left:81px;top:674px;width:12px;height:12px;border-radius:1.5px;background:#5A3A3A;border:1.2px solid #DB5C5C"></div>
<div class="a" style="left:103px;top:670px;width:1px;height:19px;background:#43454A"></div>
<svg style="left:112px;top:673px" width="16" height="14"><path d="M1 4.5 Q1 3 2.5 3 H4.5 L6 1 H10 L11.5 3 H13.5 Q15 3 15 4.5 V11.5 Q15 13 13.5 13 H2.5 Q1 13 1 11.5 Z" fill="none" stroke="#CED0D6" stroke-width="1.15" stroke-linejoin="round"/><circle cx="8" cy="8" r="2.6" fill="none" stroke="#CED0D6" stroke-width="1.15"/><circle cx="12.5" cy="5.3" r="0.6" fill="#CED0D6"/></svg>
<svg style="left:139px;top:673px" width="15" height="15"><path d="M4.5 4.5 V1.8 Q4.5 0.6 5.7 0.6 H12.4 Q13.6 0.6 13.6 1.8 V13 Q13.6 14.2 12.4 14.2 H5.7 Q4.5 14.2 4.5 13 V10.5" fill="none" stroke="#CED0D6" stroke-width="1.15"/><path d="M0.5 7.5 H9.5 M6.8 4.8 L9.5 7.5 L6.8 10.2" fill="none" stroke="#DB5C5C" stroke-width="1.3"/></svg>
<svg style="left:164px;top:673px" width="17" height="17"><path d="M2.5 13.5 Q0.8 12 0.8 8.8 A7.2 7.2 0 0 1 15.2 8.8 Q15.2 12 13.5 13.5 Z" fill="none" stroke="#CED0D6" stroke-width="1.15" stroke-linejoin="round"/><path d="M6 11 L10.8 6.5" stroke="#CED0D6" stroke-width="1.15"/><circle cx="7" cy="10.3" r="1.3" fill="#CED0D6"/><path d="M16.5 13 V16.5 H13 Z" fill="#CED0D6"/></svg>
<div class="a" style="left:197px;top:674px;width:2px;height:2px;background:#CED0D6"></div>
<div class="a" style="left:197px;top:679px;width:2px;height:2px;background:#CED0D6"></div>
<div class="a" style="left:197px;top:684px;width:2px;height:2px;background:#CED0D6"></div>
<!-- console left col icons -->
<svg style="left:55px;top:709px" width="10" height="13"><path d="M5 1 V12.5 M0.8 5.2 L5 1 L9.2 5.2" fill="none" stroke="#5A5D63" stroke-width="1.2"/></svg>
<svg style="left:55px;top:736px" width="10" height="13"><path d="M5 0 V11.5 M0.8 7.3 L5 11.5 L9.2 7.3" fill="none" stroke="#5A5D63" stroke-width="1.2"/></svg>
<svg style="left:52px;top:762px" width="16" height="14"><path d="M0.8 1.2 H15 M0.8 9.8 H5.5" stroke="#CED0D6" stroke-width="1.2"/><path d="M0.8 5.5 H12.3 Q14.8 5.5 14.8 7.8 Q14.8 10 12.3 10 H8" stroke="#9A9DA3" stroke-width="1.2" fill="none"/><path d="M9.8 7.8 L7.6 10 L9.8 12.2" fill="none" stroke="#CED0D6" stroke-width="1.2"/></svg>
<svg style="left:52px;top:788px" width="16" height="13"><path d="M0.8 1.2 H5.5 M0.8 11.8 H15" stroke="#CED0D6" stroke-width="1.2"/><path d="M0.8 5 H5.5" stroke="#9A9DA3" stroke-width="1.2"/><path d="M11 0 V9 M7.8 5.8 L11 9 L14.2 5.8" fill="none" stroke="#CED0D6" stroke-width="1.2"/></svg>
<svg style="left:52px;top:813px" width="16" height="14"><path d="M4 4 V1 H12 V4 M3.5 10 H1 V5.5 Q1 4 2.5 4 H13.5 Q15 4 15 5.5 V10 H12.5 M4 7.8 H12 V13 H4 Z" fill="none" stroke="#5A5D63" stroke-width="1.15" stroke-linejoin="round"/></svg>
<svg style="left:53px;top:838px" width="14" height="16"><path d="M0.6 3.5 H13.4 M4.8 3.5 V2 Q4.8 0.8 6 0.8 H8 Q9.2 0.8 9.2 2 V3.5 M2 3.5 L2.8 14 Q2.9 15 3.9 15 H10.1 Q11.1 15 11.2 14 L12 3.5 M5.5 6.5 V12 M8.5 6.5 V12" fill="none" stroke="#CED0D6" stroke-width="1.15" stroke-linejoin="round"/></svg>
<!-- console content -->
<div class="a" style="left:91px;top:698px;width:256px;height:22px;background:#393B40"></div>
<div class="m" style="left:91px;top:699px;color:#8E9197">E:\JDK\jdk-8u65\bin\java.exe ...</div>
<div class="m" style="left:91px;top:721px;color:#BCBEC4">registry is running...</div>
<div class="m" style="left:91px;top:743px;color:#BCBEC4">liming is bind in registry</div>
<div class="a" style="left:91px;top:766px;width:2px;height:17px;background:#CED0D6"></div>

<!-- status bar content -->
<div class="a" style="left:14px;top:1013px;width:8px;height:8px;border-radius:2px;border:1.3px solid #548AF7"></div>
<div class="t" style="left:27px;top:1006px;line-height:22px;color:#B4B8BF">RMIServer</div>
<div class="t" style="left:111px;top:1006px;line-height:22px;color:#B4B8BF">src</div>
<div class="t" style="left:152px;top:1006px;line-height:22px;color:#B4B8BF">main</div>
<div class="t" style="left:204px;top:1006px;line-height:22px;color:#B4B8BF">java</div>
<svg style="left:252px;top:1008px" width="15" height="15"><svg viewBox="0 0 16 16" width="15" height="15" style="position:static;overflow:visible"><circle cx="8" cy="8" r="6.9" fill="#25324D" stroke="#548AF7" stroke-width="1.2"/><path d="M10.3 6.1 A2.9 2.9 0 1 0 10.3 9.9" fill="none" stroke="#548AF7" stroke-width="1.2"/><path d="M8.5 -0.5 L15.5 3.5 L8.5 7.5 Z" fill="#253627" stroke="#5FB865" stroke-width="1.1" stroke-linejoin="round"/></svg></svg>
<div class="t" style="left:271px;top:1006px;line-height:22px;color:#B4B8BF;letter-spacing:-0.15px">EvilClassServer</div>
<svg style="left:96px;top:1012px" width="6" height="9"><path d="M1 1 L4.5 4.5 L1 8" fill="none" stroke="#A8ABB0" stroke-width="1.1"/></svg>
<svg style="left:137px;top:1012px" width="6" height="9"><path d="M1 1 L4.5 4.5 L1 8" fill="none" stroke="#A8ABB0" stroke-width="1.1"/></svg>
<svg style="left:189px;top:1012px" width="6" height="9"><path d="M1 1 L4.5 4.5 L1 8" fill="none" stroke="#A8ABB0" stroke-width="1.1"/></svg>
<svg style="left:237px;top:1012px" width="6" height="9"><path d="M1 1 L4.5 4.5 L1 8" fill="none" stroke="#A8ABB0" stroke-width="1.1"/></svg>
<div class="t" style="left:1612px;top:1006px;line-height:22px;color:#B4B8BF">5:1</div>
<div class="t" style="left:1645px;top:1006px;line-height:22px;color:#B4B8BF;letter-spacing:-0.8px">CRLF</div>
<div class="t" style="left:1689px;top:1006px;line-height:22px;color:#B4B8BF;letter-spacing:-0.4px">UTF-8</div>
<svg style="left:1739px;top:1009px" width="16" height="16"><svg viewBox="0 0 20 20" width="16" height="16" fill="#6A4DF0" stroke="#FFFFFF" style="position:static;overflow:visible"><path d="M6.9 0.3 L10.8 0.6 L11.3 2.5 L17 2.8 L18.7 5.5 L20 12.1 L19 14.8 L14.9 15.3 L12.4 19.7 L9.4 20 L8.3 18.3 L2.8 17.5 L1.2 14.8 L3.4 12.6 L0.1 7.7 L1.5 5 L5 4.4 Z" stroke="none"/><path d="M7.6 1.6 L5.2 6 H18 M3.3 6.2 L8.6 14.6 L4.2 16.2 M18.6 11.6 L15.2 8.6 L10 18.3" fill="none" stroke-width="1.3" stroke-linejoin="round"/></svg></svg>
<svg style="left:1773px;top:1009px" width="15" height="16"><path d="M7 14.5 H2.3 Q1 14.5 1 13.2 V2.3 Q1 1 2.3 1 H7.5 L11.5 5 V8" fill="none" stroke="#CED0D6" stroke-width="1.1" stroke-linejoin="round"/><circle cx="10.5" cy="12" r="2.3" fill="none" stroke="#CED0D6" stroke-width="1.1"/><path d="M10.5 8.6 V9.4 M10.5 14.6 V15.4 M7.1 12 H7.9 M13.1 12 H13.9" stroke="#CED0D6" stroke-width="1.1"/></svg>
<div class="t" style="left:1791px;top:1006px;line-height:22px;color:#B4B8BF;font-size:12px">4 个空格</div>
<svg style="left:1857px;top:1010px" width="14" height="13"><rect x="0.6" y="5.5" width="9" height="7" rx="1.2" fill="none" stroke="#CED0D6" stroke-width="1.1"/><path d="M7 5.5 V3.5 Q7 0.8 9.8 0.8 Q12.8 0.8 12.8 3.5 V5" fill="none" stroke="#CED0D6" stroke-width="1.1"/><path d="M5.1 8 V10" stroke="#CED0D6" stroke-width="1.2"/></svg>
<svg style="left:1886px;top:1009px" width="16" height="16"><circle cx="8" cy="8" r="6.6" fill="none" stroke="#CED0D6" stroke-width="1.3"/><path d="M8 4 V9.2" stroke="#DFE1E5" stroke-width="2"/><rect x="7" y="10.8" width="2" height="1.9" fill="#DFE1E5"/></svg>

</body></html>
